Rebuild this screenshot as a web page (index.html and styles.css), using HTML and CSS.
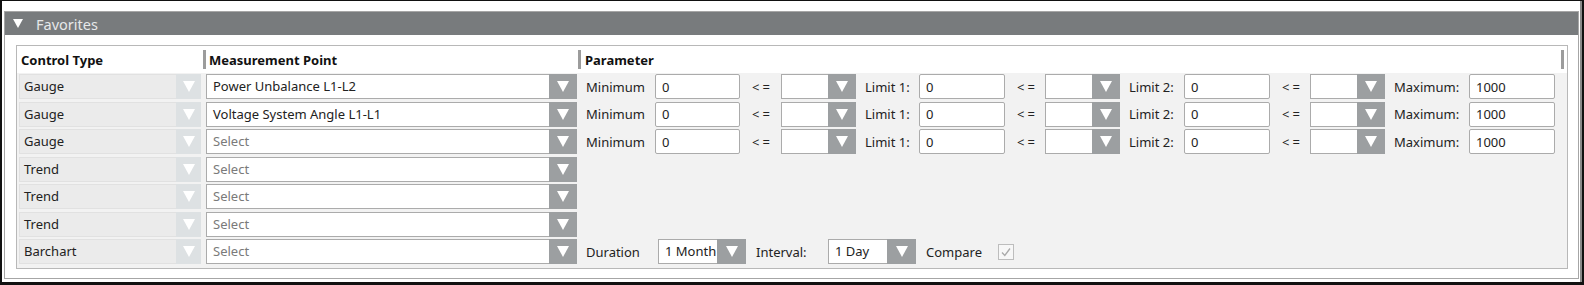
FILE: index.html
```html
<!DOCTYPE html>
<html lang="en">
<head>
  <meta charset="UTF-8" />
  <title>Favorites</title>
  <link rel="stylesheet" href="styles.css">
</head>
<body>
  <div class="frame">
    <div class="panel">
      <div class="panel-head">
        <span class="caret"></span>
        <span class="title">Favorites</span>
      </div>
      <div class="panel-body">
        <div class="table">
          <div class="head-row">
            <div class="hcell c-type">Control Type</div>
            <div class="grip"></div>
            <div class="hcell c-point">Measurement Point</div>
            <div class="grip"></div>
            <div class="hcell c-param">Parameter</div>
            <div class="grip"></div>
          </div>

          <div class="rows">
            <div class="row">
              <div class="combo disabled"><span class="val">Gauge</span><span class="arrow"></span></div>
              <div class="combo point"><span class="val">Power Unbalance L1-L2</span><span class="arrow"></span></div>
              <div class="params">
                <span class="lbl">Minimum</span>
                <input class="num" type="text" value="0">
                <span class="lbl op">&lt;=</span>
                <div class="combo small"><span class="val"></span><span class="arrow"></span></div>
                <span class="lbl">Limit 1:</span>
                <input class="num" type="text" value="0">
                <span class="lbl op">&lt;=</span>
                <div class="combo small"><span class="val"></span><span class="arrow"></span></div>
                <span class="lbl">Limit 2:</span>
                <input class="num" type="text" value="0">
                <span class="lbl op">&lt;=</span>
                <div class="combo small"><span class="val"></span><span class="arrow"></span></div>
                <span class="lbl">Maximum:</span>
                <input class="num" type="text" value="1000">
              </div>
            </div>

            <div class="row">
              <div class="combo disabled"><span class="val">Gauge</span><span class="arrow"></span></div>
              <div class="combo point"><span class="val">Voltage System Angle L1-L1</span><span class="arrow"></span></div>
              <div class="params">
                <span class="lbl">Minimum</span>
                <input class="num" type="text" value="0">
                <span class="lbl op">&lt;=</span>
                <div class="combo small"><span class="val"></span><span class="arrow"></span></div>
                <span class="lbl">Limit 1:</span>
                <input class="num" type="text" value="0">
                <span class="lbl op">&lt;=</span>
                <div class="combo small"><span class="val"></span><span class="arrow"></span></div>
                <span class="lbl">Limit 2:</span>
                <input class="num" type="text" value="0">
                <span class="lbl op">&lt;=</span>
                <div class="combo small"><span class="val"></span><span class="arrow"></span></div>
                <span class="lbl">Maximum:</span>
                <input class="num" type="text" value="1000">
              </div>
            </div>

            <div class="row">
              <div class="combo disabled"><span class="val">Gauge</span><span class="arrow"></span></div>
              <div class="combo point"><span class="val empty">Select</span><span class="arrow"></span></div>
              <div class="params">
                <span class="lbl">Minimum</span>
                <input class="num" type="text" value="0">
                <span class="lbl op">&lt;=</span>
                <div class="combo small"><span class="val"></span><span class="arrow"></span></div>
                <span class="lbl">Limit 1:</span>
                <input class="num" type="text" value="0">
                <span class="lbl op">&lt;=</span>
                <div class="combo small"><span class="val"></span><span class="arrow"></span></div>
                <span class="lbl">Limit 2:</span>
                <input class="num" type="text" value="0">
                <span class="lbl op">&lt;=</span>
                <div class="combo small"><span class="val"></span><span class="arrow"></span></div>
                <span class="lbl">Maximum:</span>
                <input class="num" type="text" value="1000">
              </div>
            </div>

            <div class="row">
              <div class="combo disabled"><span class="val">Trend</span><span class="arrow"></span></div>
              <div class="combo point"><span class="val empty">Select</span><span class="arrow"></span></div>
            </div>

            <div class="row">
              <div class="combo disabled"><span class="val">Trend</span><span class="arrow"></span></div>
              <div class="combo point"><span class="val empty">Select</span><span class="arrow"></span></div>
            </div>

            <div class="row">
              <div class="combo disabled"><span class="val">Trend</span><span class="arrow"></span></div>
              <div class="combo point"><span class="val empty">Select</span><span class="arrow"></span></div>
            </div>

            <div class="row">
              <div class="combo disabled"><span class="val">Barchart</span><span class="arrow"></span></div>
              <div class="combo point"><span class="val empty">Select</span><span class="arrow"></span></div>
              <div class="bar-opts">
                <span class="lbl">Duration</span>
                <div class="combo dur"><span class="val">1 Month</span><span class="arrow"></span></div>
                <span class="lbl">Interval:</span>
                <div class="combo dur"><span class="val">1 Day</span><span class="arrow"></span></div>
                <span class="lbl">Compare</span>
                <span class="check">
                  <svg width="12" height="12" viewBox="0 0 12 12"><path d="M2 6.5 L4.8 9.5 L10 2.5" fill="none" stroke="#a9a9a9" stroke-width="1.3"/></svg>
                </span>
              </div>
            </div>
          </div>
        </div>
      </div>
    </div>
  </div>
</body>
</html>
```

FILE: styles.css
```css
* {
  box-sizing: border-box;
}
body {
  margin: 0;
  font-family: "Noto Sans", "Open Sans", sans-serif;
  font-size: 13px;
  color: #222;
  background: #fff;
}
.frame {
  width: 1584px;
  height: 285px;
  border-top: 1px solid #111;
  border-left: 2px solid #111;
  border-bottom: 3px solid #111;
  border-right: 2px solid #111;
  padding: 10px 3px 3px 2px;
  background: #fff;
  box-shadow: inset -2px 0 0 #8a8a8a;
}
.panel {
  height: 268px;
  border: 1px solid #a6a6a6;
  display: flex;
  flex-direction: column;
}
.panel-head {
  height: 23px;
  background: #787b7d;
  display: flex;
  align-items: center;
  padding-left: 8px;
  flex-shrink: 0;
}
.caret {
  width: 0;
  height: 0;
  border-left: 5px solid transparent;
  border-right: 5px solid transparent;
  border-top: 9px solid #fff;
}
.title {
  margin-left: 13px;
  color: #e6e8e9;
  font-size: 14.5px;
}
.panel-body {
  flex: 1;
  padding: 10px 10px 9px 11px;
}
.table {
  height: 100%;
  border: 1px solid #b8b8b8;
  background: #f2f2f2;
}
.head-row {
  height: 27px;
  background: #fff;
  display: flex;
  align-items: center;
  font-weight: bold;
  color: #111;
}
.hcell {
  white-space: nowrap;
}
.c-type {
  width: 186px;
  padding-left: 4px;
}
.c-point {
  width: 372px;
  padding-left: 3px;
}
.c-param {
  width: 980px;
  padding-left: 4px;
}
.grip {
  width: 3px;
  height: 19px;
  background: #9c9c9c;
}
.rows {
  padding: 1px 0 0 2px;
  display: flex;
  flex-direction: column;
  gap: 2.5px;
}
.row {
  height: 25px;
  display: flex;
  align-items: center;
}
.combo {
  height: 25px;
  display: flex;
  border: 1px solid #ababab;
  background: #fff;
}
.combo .val {
  flex: 1;
  padding-left: 6px;
  line-height: 23px;
  white-space: nowrap;
  overflow: hidden;
}
.combo .val.empty {
  color: #7a7a7a;
}
.combo .arrow {
  width: 28px;
  margin: -1px -1px -1px 0;
  background: #9c9fa1;
  display: flex;
  align-items: center;
  justify-content: center;
}
.combo .arrow::after {
  content: "";
  border-left: 6px solid transparent;
  border-right: 6px solid transparent;
  border-top: 11px solid #fff;
}
.combo.disabled {
  width: 182px;
  background: #ebebeb;
  border-color: #e1e1e1;
}
.combo.disabled .val {
  padding-left: 4px;
}
.combo.disabled .arrow {
  width: 25px;
  background: #dde1e3;
}
.combo.point {
  width: 371px;
  margin-left: 5px;
}
.params {
  display: grid;
  grid-template-columns: 78px 85px 41px 75px 63px 86px 40px 75px 64px 86px 40px 75px 84px 86px;
  align-items: center;
}
.lbl {
  padding-left: 9px;
  white-space: nowrap;
}
.lbl.op {
  padding-left: 12px;
  letter-spacing: 3px;
}
.num {
  height: 25px;
  width: 100%;
  border: 1px solid #ababab;
  border-radius: 2px;
  font: inherit;
  color: #222;
  padding: 0 6px;
  background: #fff;
}
.combo.small {
  width: 75px;
}
.bar-opts {
  display: grid;
  grid-template-columns: 81px 88px 82px 88px 82px 16px;
  align-items: center;
}
.combo.dur .arrow {
  width: 29px;
}
.bar-opts .lbl {
  padding-left: 10px;
}
.bar-opts .lbl:first-child {
  padding-left: 9px;
}
.check {
  width: 16px;
  height: 16px;
  border: 1px solid #bdbdbd;
  background: #f7f7f7;
  display: flex;
  align-items: center;
  justify-content: center;
}
```
